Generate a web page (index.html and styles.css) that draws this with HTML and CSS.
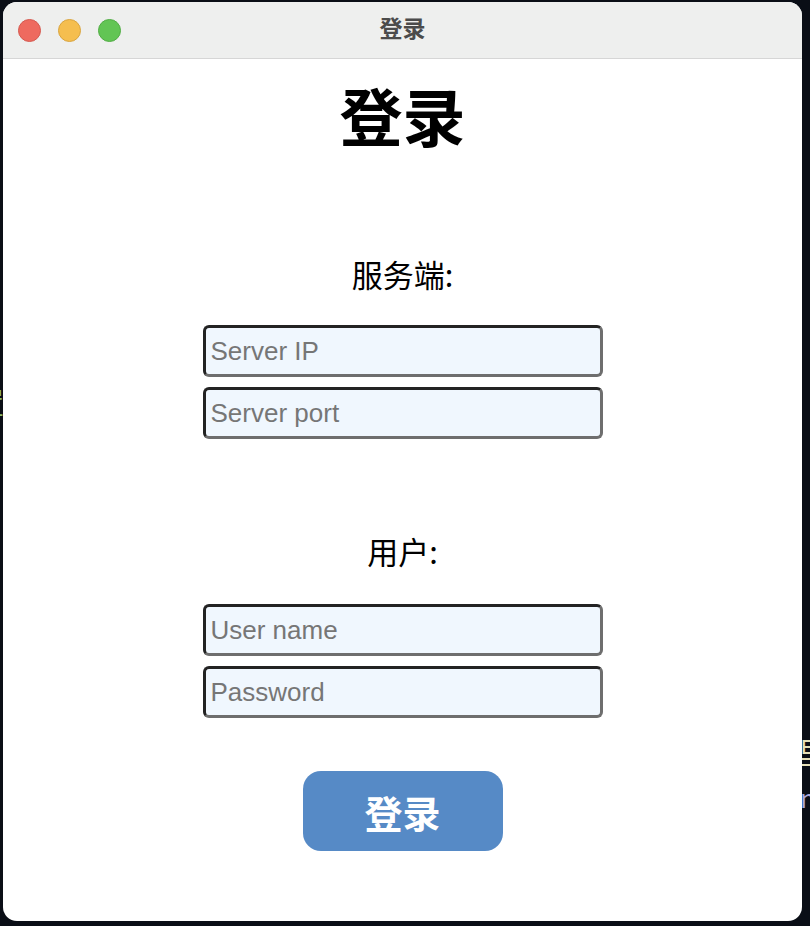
FILE: index.html
```html
<!DOCTYPE html>
<html lang="zh">
<head>
<meta charset="utf-8">
<title>登录</title>
<link rel="stylesheet" href="styles.css">
</head>
<body>
<span class="bg-text bg-left">置</span>
<span class="bg-text bg-right">里</span>
<span class="bg-text bg-right2">m</span>
<div class="window">
  <div class="titlebar">
    <div class="lights">
      <span class="light red"></span>
      <span class="light yellow"></span>
      <span class="light green"></span>
    </div>
    <div class="title">登录</div>
  </div>
  <div class="content">
    <h1 class="heading">登录</h1>
    <div class="section server">
      <div class="label">服务端:</div>
      <input class="field" type="text" placeholder="Server IP">
      <input class="field" type="text" placeholder="Server port">
    </div>
    <div class="section user">
      <div class="label">用户:</div>
      <input class="field" type="text" placeholder="User name">
      <input class="field" type="password" placeholder="Password">
    </div>
    <button class="login-btn">登录</button>
  </div>
</div>
</body>
</html>
```
FILE: styles.css
```css
html, body {
  margin: 0;
  height: 100%;
}
body {
  background: #0a0e16;
  padding: 2px 0 0 3px;
  box-sizing: border-box;
  overflow: hidden;
  position: relative;
  font-family: "Noto Sans CJK SC", "Noto Sans", sans-serif;
}
.bg-text {
  position: absolute;
  font-size: 30px;
  line-height: 1;
  font-family: "Noto Sans CJK SC", sans-serif;
}
.bg-left {
  left: -26px;
  top: 386px;
  color: #8fbf6a;
}
.bg-right {
  left: 798px;
  top: 736px;
  color: #e6e0b8;
}
.bg-right2 {
  left: 800px;
  top: 784px;
  color: #a9a8d8;
  font-size: 26px;
}
.window {
  position: relative;
  width: 799px;
  height: 919px;
  background: #ffffff;
  border-radius: 14px;
  overflow: hidden;
  display: flex;
  flex-direction: column;
}
.titlebar {
  height: 56px;
  background: #eeefee;
  border-bottom: 1px solid #d6d6d6;
  display: flex;
  align-items: center;
  position: relative;
}
.lights {
  display: flex;
  gap: 17px;
  padding-left: 15px;
}
.light {
  width: 23px;
  height: 23px;
  border-radius: 50%;
  box-sizing: border-box;
}
.red { background: #ee6a5f; border: 1px solid #d55a50; }
.yellow { background: #f5be4f; border: 1px solid #d9a540; }
.green { background: #62c554; border: 1px solid #52ad45; }
.title {
  position: absolute;
  left: 0;
  right: 0;
  top: 0;
  bottom: 0;
  padding-bottom: 6px;
  box-sizing: border-box;
  display: flex;
  align-items: center;
  justify-content: center;
  font-size: 23px;
  font-weight: bold;
  color: #4b4b4b;
}
.content {
  display: flex;
  flex-direction: column;
  align-items: center;
}
.heading {
  margin: 15px 0 0;
  font-size: 63px;
  line-height: 80px;
  font-weight: bold;
  color: #000;
}
.section {
  display: flex;
  flex-direction: column;
  align-items: center;
  gap: 10px;
}
.server {
  margin-top: 100px;
}
.user {
  margin-top: 92px;
}
.label {
  font-size: 31px;
  line-height: 40px;
  color: #000;
  margin-bottom: 21px;
}
.user .label {
  margin-bottom: 23px;
}
.field {
  width: 400px;
  height: 52px;
  box-sizing: border-box;
  border: 3px solid;
  border-color: #232323 #6e6e6e #6e6e6e #232323;
  border-radius: 6px;
  background: #f0f7fe;
  padding: 0 5px;
  font-family: "Liberation Sans", Arial, sans-serif;
  font-size: 26px;
  color: #222;
  outline: none;
}
.field::placeholder {
  color: #767676;
}
.login-btn {
  margin-top: 53px;
  width: 200px;
  height: 80px;
  border: none;
  border-radius: 18px;
  background: #568ac6;
  color: #fff;
  font-family: "Noto Sans CJK SC", sans-serif;
  font-size: 38px;
  font-weight: bold;
}
```
